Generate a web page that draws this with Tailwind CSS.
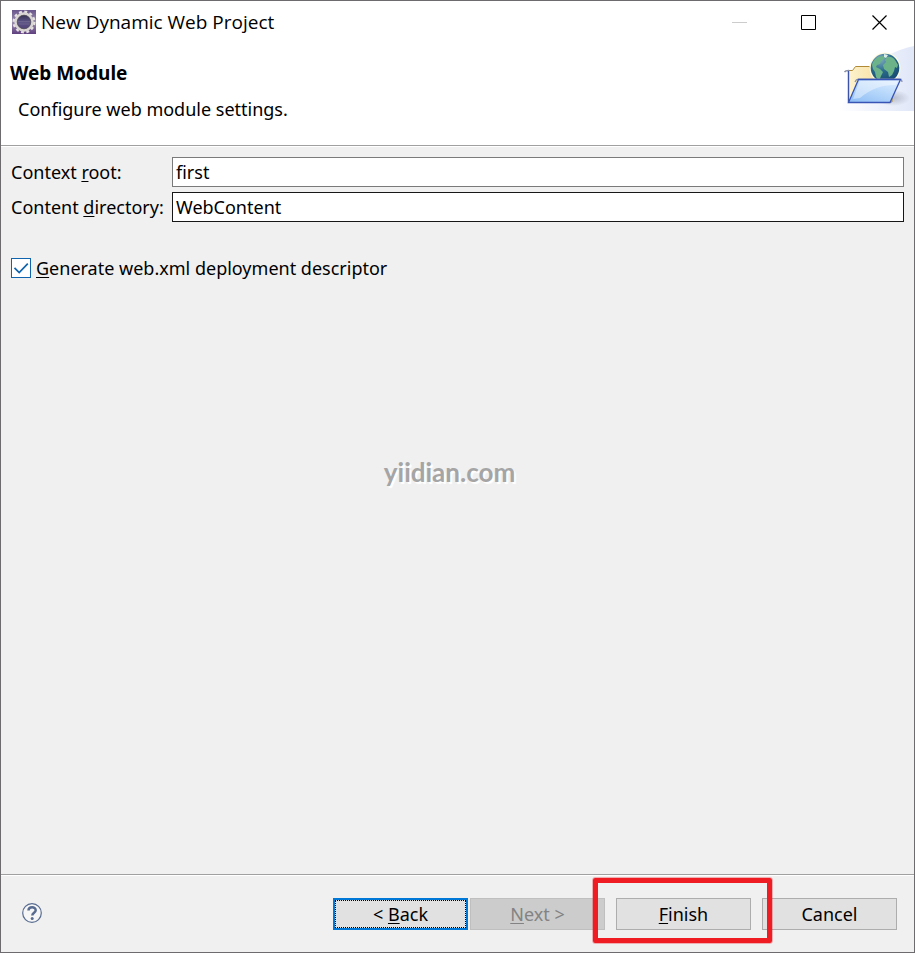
<!DOCTYPE html>
<html lang="en">
<head>
<meta charset="utf-8">
<meta name="viewport" content="width=device-width, initial-scale=1">
<title>New Dynamic Web Project</title>
<script src="https://cdn.jsdelivr.net/npm/@tailwindcss/browser@4"></script>
</head>
<body class="flex min-h-screen flex-col border border-[#6e6b6e] bg-[#f0f0f0] font-['Noto_Sans','Open_Sans',sans-serif] text-lg leading-6 text-black">
  <header class="relative border-b border-[#a0a0a0] bg-white">
    <div class="flex h-[42px] items-center pl-[11px]">
      <svg class="size-6 shrink-0" viewBox="0 0 24 24" aria-hidden="true">
        <defs>
          <linearGradient id="tile" x2="0" y2="1"><stop stop-color="#69568c"/><stop offset=".5" stop-color="#9a8fae"/><stop offset="1" stop-color="#604080"/></linearGradient>
          <linearGradient id="core" x2="0" y2="1"><stop stop-color="#2f2a48"/><stop offset=".5" stop-color="#5f5688"/><stop offset="1" stop-color="#4c3d72"/></linearGradient>
        </defs>
        <rect width="24" height="24" fill="url(#tile)"/>
        <circle cx="12" cy="12" r="10.300" fill="none" stroke="#e6e2e2" stroke-width="2.400" stroke-dasharray="2.900 2.493"/>
        <circle cx="12" cy="12" r="8.300" fill="url(#core)" stroke="#d9d6d3" stroke-width="2.800"/>
        <circle cx="12" cy="12" r="6.800" fill="none" stroke="#55525a" stroke-width=".8"/>
        <path d="M6 11.500h12M6.500 14h11" stroke="#7b7198" stroke-width=".8" opacity=".7"/>
      </svg>
      <h1 class="flex-1 pl-[5px] font-['Open_Sans','Noto_Sans',sans-serif] text-[19px]">New Dynamic Web Project</h1>
      <div class="flex">
        <button type="button" disabled aria-label="Minimize" class="flex h-[42px] w-[70px] items-center justify-center"><svg class="size-4" viewBox="0 0 16 16"><path d="M1 8.500h15" stroke="#ccc"/></svg></button>
        <button type="button" aria-label="Maximize" class="flex h-[42px] w-[70px] items-center justify-center"><svg class="size-4" viewBox="0 0 16 16"><path d="M.5 1.500h14v14h-14z" fill="none" stroke="#000"/></svg></button>
        <button type="button" aria-label="Close" class="flex h-[42px] w-[70px] items-center justify-center"><svg class="size-4" viewBox="0 0 16 16"><path d="M1.500 1.500l14 14M15.500 1.500l-14 14" stroke="#000" stroke-width="1.200"/></svg></button>
      </div>
    </div>
    <div class="flex h-[102px] justify-between">
      <div class="pl-[9px] pt-[18px]">
        <h2 class="text-[19px] font-bold">Web Module</h2>
        <p class="mt-3 pl-2">Configure web module settings.</p>
      </div>
      <svg class="mt-px h-[68px] w-[75px]" viewBox="839 44 75 68" aria-hidden="true">
        <defs>
          <linearGradient id="haze"><stop stop-color="#fff"/><stop offset="1" stop-color="#e0e7f8"/></linearGradient>
          <linearGradient id="front" x1="0" y1="1" x2=".7" y2="0"><stop stop-color="#8bbcf4"/><stop offset=".55" stop-color="#b5d6fa"/><stop offset="1" stop-color="#d5e9ff"/></linearGradient>
          <linearGradient id="back"><stop stop-color="#fdf3cf"/><stop offset="1" stop-color="#f7d88d"/></linearGradient>
          <radialGradient id="sea" cx=".35" cy=".2" r=".8"><stop stop-color="#7fabc0"/><stop offset=".5" stop-color="#2c6c8c"/><stop offset="1" stop-color="#174d73"/></radialGradient>
          <radialGradient id="shade"><stop stop-color="#8f95a8" stop-opacity=".55"/><stop offset="1" stop-color="#8f95a8" stop-opacity="0"/></radialGradient>
        </defs>
        <path d="M839 111C852 84 874 54 914 46v65z" fill="url(#haze)"/>
        <ellipse cx="893" cy="98" rx="17" ry="8" fill="url(#shade)"/>
        <path d="M848.500 102V70.500h4l3-4h14l2.500 3.500h20v32z" fill="url(#back)" stroke="#b08a35"/>
        <path d="M844.500 72q1-1.500 4-1.500v32" fill="none" stroke="#8b92a8" stroke-width="1.400"/>
        <path d="M848.500 71v32" stroke="#3b53a8" stroke-width="1.200"/>
        <circle cx="885" cy="68" r="15.500" fill="#fffbe0"/>
        <circle cx="885" cy="68" r="14.300" fill="url(#sea)"/>
        <path d="M872 65q1-5 6-8l5-1 2 2-2 2-2 1-1 3-3 1-1 2 4 2 3 3-2 4-2 5-3-4-1-5-2-3zM887 57q5-1 8 3l3 5-1 3-2-1-1 4-2 4-3 2-1-5-4-3-1-4 3-3-1-2z" fill="#6db38a"/>
        <path d="M884 54l4 1-2 3-2-1z" fill="#dceee6"/>
        <path d="M855 82q1-3 4-3h40q3 0 3 3" fill="none" stroke="#8b92a8" stroke-width="1.200"/>
        <path d="M858.500 79.500h42l-10.500 23h-41.500z" fill="url(#front)" stroke="#3855b5" stroke-width="1.300"/>
        <path d="M859.500 81h38.500l-2 4c-16 0-25 4-36 13l-7 1z" fill="#fff" opacity=".4"/>
      </svg>
    </div>
  </header>

  <main class="relative flex-1 border-t border-b border-t-white border-b-[#a0a0a0]">
    <form id="module" class="px-2.5 pt-2.5">
      <div class="grid grid-cols-[157px_1fr] items-center gap-x-1 gap-y-[5px]">
        <label for="root" class="whitespace-nowrap">Context <span class="underline underline-offset-2">r</span>oot:</label>
        <input id="root" type="text" value="first" class="h-[30px] w-full min-w-0 border border-[#7a7a7a] bg-white px-[3px] outline-none">
        <label for="directory" class="whitespace-nowrap">Content <span class="underline underline-offset-2">d</span>irectory:</label>
        <input id="directory" type="text" value="WebContent" class="h-[30px] w-full min-w-0 border border-[#171717] bg-white px-[3px] outline-none">
      </div>
      <div class="mt-[34px] flex items-center">
        <span class="grid size-5">
          <input id="generate" type="checkbox" checked class="peer col-start-1 row-start-1 size-5 appearance-none border border-[#0f64ad] bg-white">
          <svg class="pointer-events-none invisible col-start-1 row-start-1 size-5 peer-checked:visible" viewBox="0 0 20 20" aria-hidden="true"><path d="M3.500 9.800l4.700 4.700 8.600-8.800" fill="none" stroke="#0f64ad" stroke-width="1.700"/></svg>
        </span>
        <label for="generate" class="pl-[5px]"><span class="underline underline-offset-2">G</span>enerate web.xml deployment descriptor</label>
      </div>
    </form>
    <p class="pointer-events-none absolute inset-x-0 top-[307px] pr-4 text-center font-['Comic_Sans_MS','Lato',sans-serif] text-[26px] leading-9 font-bold text-[#a5a5a5] [text-shadow:2px_2px_1px_#fff]">yiidian.com</p>
  </main>

  <footer class="flex h-[77px] items-start justify-between border-t border-white pt-[22px] pr-[17px] pl-[21px]">
    <button type="button" aria-label="Help" class="mt-[5px]">
      <svg class="size-5" viewBox="0 0 20 20" aria-hidden="true">
        <circle cx="10" cy="10" r="9.300" fill="#f6f6f6" stroke="#586b90" stroke-width="1.200"/>
        <path d="M6.500 7.500c0-4.200 7.200-4.200 7.200-.2 0 2.500-3.400 2.500-3.400 5.200" fill="none" stroke="#586b90" stroke-width="2.500"/>
        <circle cx="10.200" cy="15.500" r="1.500" fill="#586b90"/>
      </svg>
    </button>
    <div class="flex">
      <button type="button" class="h-8 w-[135px] border-2 border-[#0078d7] bg-[#e1e1e1] outline-1 -outline-offset-3 outline-dotted outline-black"><span>&lt; </span><span class="underline underline-offset-2">B</span>ack</button>
      <button type="button" disabled class="ml-0.5 h-8 w-[135px] border border-[#bfbfbf] bg-[#ccc] text-[#838383]"><span class="underline underline-offset-2">N</span>ext &gt;</button>
      <div class="relative ml-[11px]">
        <button type="submit" form="module" class="h-8 w-[135px] border border-[#adadad] bg-[#e1e1e1]"><span class="underline underline-offset-2">F</span>inish</button>
        <div class="pointer-events-none absolute -top-5 -right-[21px] -bottom-[13px] -left-[23px] z-10 rounded-xs border-5 border-[#f01c24] outline-1 outline-[#f01c24]/30"></div>
      </div>
      <button type="button" class="ml-[11px] h-8 w-[135px] border border-[#adadad] bg-[#e1e1e1]">Cancel</button>
    </div>
  </footer>
</body>
</html>
